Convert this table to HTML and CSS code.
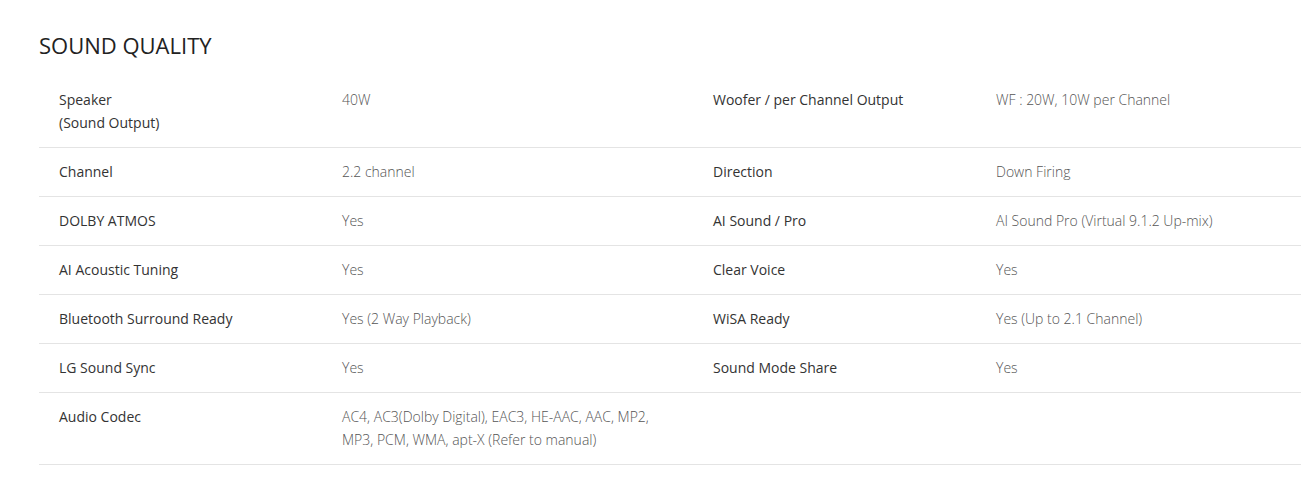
FILE: index.html
```html
<!DOCTYPE html>
<html lang="en">
<head>
<meta charset="utf-8">
<title>Sound Quality</title>
<link rel="stylesheet" href="styles.css">
</head>
<body>
<section class="spec">
  <h2 class="spec-title">SOUND QUALITY</h2>
  <div class="spec-table">
    <div class="spec-row">
      <div class="cell label">Speaker<br>(Sound Output)</div>
      <div class="cell value">40W</div>
      <div class="cell label">Woofer / per Channel Output</div>
      <div class="cell value">WF : 20W, 10W per Channel</div>
    </div>
    <div class="spec-row">
      <div class="cell label">Channel</div>
      <div class="cell value">2.2 channel</div>
      <div class="cell label">Direction</div>
      <div class="cell value">Down Firing</div>
    </div>
    <div class="spec-row">
      <div class="cell label">DOLBY ATMOS</div>
      <div class="cell value">Yes</div>
      <div class="cell label">AI Sound / Pro</div>
      <div class="cell value">AI Sound Pro (Virtual 9.1.2 Up-mix)</div>
    </div>
    <div class="spec-row">
      <div class="cell label">AI Acoustic Tuning</div>
      <div class="cell value">Yes</div>
      <div class="cell label">Clear Voice</div>
      <div class="cell value">Yes</div>
    </div>
    <div class="spec-row">
      <div class="cell label">Bluetooth Surround Ready</div>
      <div class="cell value">Yes (2 Way Playback)</div>
      <div class="cell label">WiSA Ready</div>
      <div class="cell value">Yes (Up to 2.1 Channel)</div>
    </div>
    <div class="spec-row">
      <div class="cell label">LG Sound Sync</div>
      <div class="cell value">Yes</div>
      <div class="cell label">Sound Mode Share</div>
      <div class="cell value">Yes</div>
    </div>
    <div class="spec-row">
      <div class="cell label">Audio Codec</div>
      <div class="cell value">AC4, AC3(Dolby Digital), EAC3, HE-AAC, AAC, MP2, MP3, PCM, WMA, apt-X (Refer to manual)</div>
      <div class="cell label"></div>
      <div class="cell value"></div>
    </div>
  </div>
</section>
</body>
</html>
```
FILE: styles.css
```css
html, body {
  margin: 0;
  padding: 0;
  background: #fff;
  overflow: hidden;
}
body {
  font-family: "Open Sans", "Noto Sans", Arial, sans-serif;
  color: #333;
}
.spec {
  padding: 32px 0 0 39px;
}
.spec-title {
  margin: 0 0 18px 0;
  font-size: 22px;
  line-height: 26px;
  font-weight: 400;
  color: #222;
}
.spec-table {
  width: 1308px;
}
.spec-row {
  display: grid;
  grid-template-columns: 283px 371px 283px 371px;
  border-bottom: 1px solid #e4e4e4;
}
.cell {
  padding: 12px 20px 13px 20px;
  font-size: 14px;
  line-height: 23px;
}
.label {
  color: #333;
}
.value {
  color: #555;
  font-weight: 300;
  font-size: 14px;
}
```
